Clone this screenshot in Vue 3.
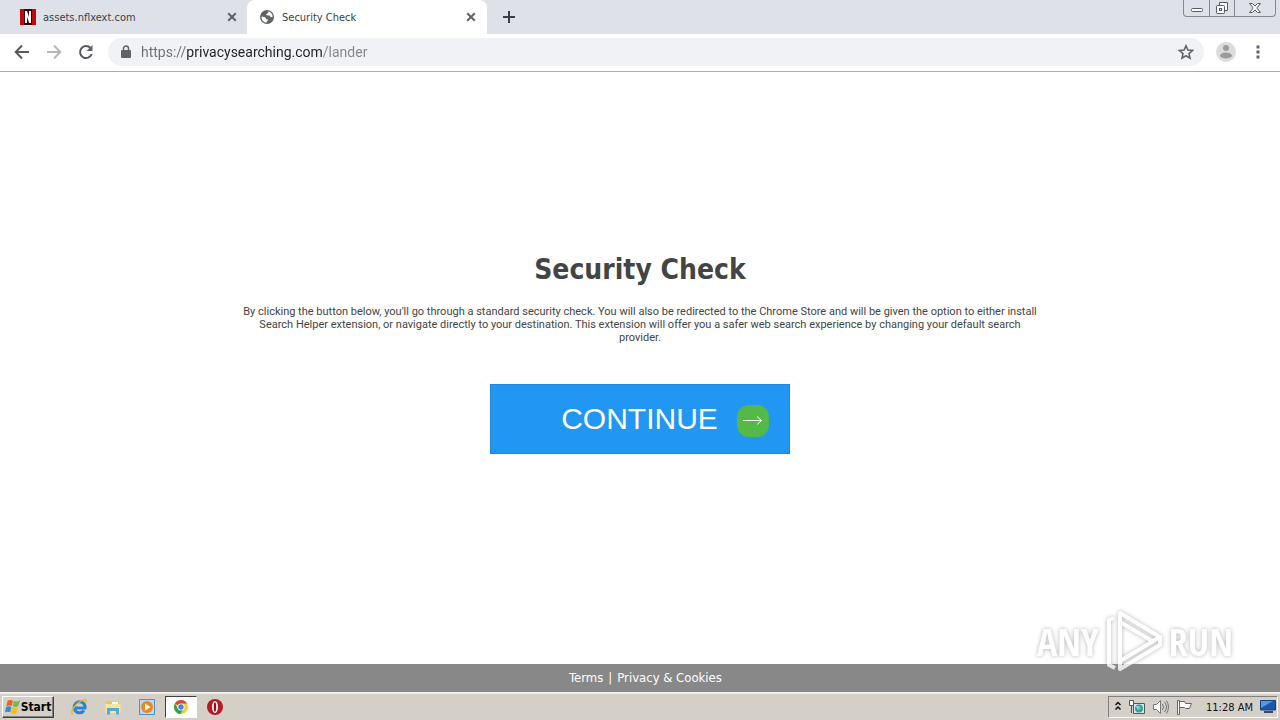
<script setup>
import { ref } from 'vue'
const address = ref('https://privacysearching.com/lander')
</script>

<template>
  <div class="screen">
    <header class="tabs">
      <div class="tab first">
        <svg class="fav" viewBox="0 0 16 16"><path fill="#c4060f" d="M0 0h16v16H0z"/><path fill="#3a0507" d="M4 0h8v16H4z"/><path fill="#fff" d="M5 2h2l2 6V2h2v12H9.200L7 8v6H5z"/></svg>
        <button class="title">assets.nflxext.com</button>
        <button class="close" aria-label="Close tab"><svg viewBox="0 0 10 10"><path d="M1.200 1.200l7.600 7.600M8.800 1.200L1.200 8.800"/></svg></button>
      </div>
      <div class="tab active">
        <svg class="fav" viewBox="0 0 16 16"><circle cx="8" cy="8" r="7" fill="#5f6368"/><path fill="#fff" d="M3 7.500l3.500 1 .7 1.700h1.600v1.400L7.500 13v.8C4.500 13.500 2.500 11 2.500 8zM7 2.300l2.500.1-.4 1.700-1.700 1v1.200l3 .3 1.100 1.300 2 .3c.4-2.700-1.500-5.400-4.500-5.900z"/></svg>
        <button class="title">Security Check</button>
        <button class="close" aria-label="Close tab"><svg viewBox="0 0 10 10"><path d="M1.200 1.200l7.600 7.600M8.800 1.200L1.200 8.800"/></svg></button>
      </div>
      <button class="new" aria-label="New tab"><svg viewBox="0 0 14 14"><path d="M7 1v12M1 7h12"/></svg></button>
      <div class="win">
        <button aria-label="Minimize"><svg width="14" height="14" viewBox="0 0 14 14"><rect x="1.500" y="7.500" width="11" height="3" rx="1"/></svg></button>
        <button aria-label="Restore"><svg width="14" height="14" viewBox="0 0 14 14"><path d="M4.500 4V1.500h8v8H10"/><rect x="1.500" y="4.500" width="8" height="8" rx="1"/><rect x="4.500" y="7.500" width="2" height="2"/></svg></button>
        <button class="wide" aria-label="Close window"><svg width="14" height="14" viewBox="0 0 14 14"><path d="M1.500 2.500h3L7 5l2.500-2.500h3L8.800 7l3.700 4.500h-3L7 9l-2.500 2.500h-3L5.200 7z"/></svg></button>
      </div>
    </header>

    <nav class="toolbar">
      <button class="nav" aria-label="Back"><svg viewBox="0 0 16 16"><path d="M15 8H2M8 1.500L1.700 8 8 14.500"/></svg></button>
      <button class="nav off" aria-label="Forward"><svg viewBox="0 0 16 16"><path d="M1 8h13M8 1.500L14.300 8 8 14.500"/></svg></button>
      <button class="nav" aria-label="Reload"><svg viewBox="0 0 16 16"><path d="M13.700 10A6 6 0 1 1 12.500 4"/><path d="M14.500 1v6h-6z" fill="#5f6368" stroke="none"/></svg></button>
      <div class="omni">
        <svg class="lock" viewBox="0 0 10 14"><path fill="#5f6368" d="M1 5h8q1 0 1 1v6q0 1-1 1H1q-1 0-1-1V6q0-1 1-1z"/><path fill="none" stroke="#5f6368" stroke-width="1.500" d="M2.500 6V3.500a2.500 2.500 0 0 1 5 0V6"/></svg>
        <input v-model="address" class="url" aria-label="Address" spellcheck="false">
        <button class="star" aria-label="Bookmark this page"><svg viewBox="0 0 16 16"><path fill="none" stroke="#5f6368" stroke-width="1.600" d="M8 1.800l1.900 4.300 4.600.4-3.500 3.100 1 4.600L8 11.800l-4 2.400 1-4.600-3.500-3.100 4.600-.4z"/></svg></button>
      </div>
      <button class="user" aria-label="Profile"><svg viewBox="0 0 20 20"><circle cx="10" cy="10" r="10" fill="#dcdcdc"/><circle cx="10" cy="6" r="3" fill="#9b9b9b"/><ellipse cx="10" cy="13.500" rx="6" ry="3" fill="#9b9b9b"/></svg></button>
      <button class="more" aria-label="Menu"><svg viewBox="0 0 4 14"><path fill="#5f6368" d="M.5.5h3v3h-3zM.5 5.500h3v3h-3zM.5 10.500h3v3h-3z"/></svg></button>
    </nav>

    <main class="page">
      <h1>Security Check</h1>
      <p>By clicking the button below, you'll go through a standard security check. You will also be redirected to the Chrome Store and will be given the option to either install<br>Search Helper extension, or navigate directly to your destination. This extension will offer you a safer web search experience by changing your default search<br>provider.</p>
      <button class="go"><span>CONTINUE</span><i><svg viewBox="0 0 20 10"><path d="M0 4.500h19M14 .5l4.500 4-4.500 4"/></svg></i></button>
    </main>

    <footer class="links"><a href="#terms">Terms</a><span>|</span><a href="#privacy">Privacy &amp; Cookies</a></footer>

    <div class="task">
      <button class="start"><svg viewBox="0 0 18 18"><path fill="#e8642b" d="M3 2q3-2 6 0L7.500 8Q5 6.500 1.500 8z"/><path fill="#78b843" d="M10 2q3 2 7-1l-2 7q-3 2-6.500 0z"/><path fill="#3b88d8" d="M1.200 9q3-1.500 6 0L6 15q-3-1.500-6 0z"/><path fill="#f6bd25" d="M8.200 9.300q3 1.700 6.500 0L13 16q-3 2-6.300 0z"/></svg><b>Start</b></button>
      <button class="app" aria-label="Internet Explorer"><svg viewBox="0 0 18 18"><path fill="none" stroke="#2d83d3" stroke-width="3" d="M14 12.500A5.500 5.500 0 1 1 15 10H5"/><path fill="none" stroke="#e9b92e" stroke-width="1.400" d="M3 16C-1 16 4 7 10 3.500c4-2.500 7-2.500 6 1"/></svg></button>
      <button class="app" aria-label="File Explorer"><svg viewBox="0 0 18 18"><path fill="#e7c85e" d="M2 3h6l1 1h6v3H2z"/><path fill="#fff" d="M8 4h6v2H8z"/><path fill="#f6e59b" d="M1.500 6h15v9h-15z"/><path fill="#53a9d8" d="M3 10h12v6.500h-3V13H6v3.500H3z"/></svg></button>
      <button class="app" aria-label="Media Player"><svg viewBox="0 0 18 18"><path fill="#b9d8f3" stroke="#4e91cf" d="M1.500 1.500h15v15h-15z"/><circle cx="9" cy="9" r="6" fill="#f58418"/><path fill="#fff" d="M7 5.500L12.500 9 7 12.500z"/></svg></button>
      <button class="app on" aria-label="Chrome"><svg viewBox="0 0 18 18"><circle cx="9" cy="9" r="7" fill="#f7cd3c"/><path fill="#de4537" d="M9 9L2.900 5.500A7 7 0 0 1 15.100 5.500H9z"/><path fill="#2ea254" d="M2.900 5.500A7 7 0 0 0 8.500 16l3.200-5.500L9 9 6 11z"/><circle cx="9" cy="9" r="3.500" fill="#fff"/><circle cx="9" cy="9" r="2.700" fill="#4285ea"/></svg></button>
      <button class="app" aria-label="Opera"><svg viewBox="0 0 18 18"><circle cx="9" cy="9" r="8" fill="#b51a1f"/><ellipse cx="9" cy="9" rx="3" ry="6" fill="#fff"/><ellipse cx="9" cy="9" rx="1.200" ry="4.800" fill="#8c1116"/></svg></button>
      <div class="tray">
        <svg width="8" height="12" viewBox="0 0 8 12"><path fill="none" stroke="#111" stroke-width="1.500" d="M1.500 4L4 1.500 6.500 4M1.500 8.500L4 6l2.500 2.500"/></svg>
        <svg width="18" height="16" viewBox="0 0 18 16"><path fill="#fff" stroke="#555" d="M1.500 1.500h4v5h-4zM3.500 6v8"/><path fill="#d6e7ea" stroke="#4b5960" d="M5.500 4.500h11v10h-11z"/><circle cx="11" cy="9.500" r="4" fill="#36a48f"/><path fill="#82c9e0" d="M7 7h4l2 2-3 2z"/></svg>
        <svg width="18" height="16" viewBox="0 0 18 16"><path fill="#fff" stroke="#777" d="M1.500 5.500h3l4-4v13l-4-4h-3z"/><path fill="none" stroke="#777" d="M10.500 5q2 3 0 6M12.500 3q4 5 0 10M14.500 1.500q4 6.500 0 13"/></svg>
        <svg width="18" height="16" viewBox="0 0 18 16"><path fill="#fff" stroke="#666" d="M1.500 15.500v-14h2v14zM3.500 2.500h5l1 2h6l-2 5h-4l-1-1h-5z"/></svg>
        <time>11:28 AM</time>
        <svg width="16" height="14" viewBox="0 0 16 14"><path fill="#1b58ad" stroke="#163f7c" d="M.5.5h15v9.500H.5z"/><path fill="#5799df" d="M1 1h12L1 8z"/><path fill="#304d70" d="M4 11h9v2H4z"/></svg>
      </div>
    </div>

    <div class="mark">
      <span>ANY</span>
      <svg viewBox="0 0 60 66"><g fill="none" stroke="#fff" stroke-width="4" stroke-linejoin="round"><path d="M16 5v48l40-24z"/><path d="M10 10L5 12v45l6 3M16 53v8l40-24v-8M16 14l34 20"/></g></svg>
      <span>RUN</span>
    </div>
  </div>
</template>

<style>
body { margin: 0; }
</style>

<style scoped>
.screen { position: relative; display: flex; flex-direction: column; height: 100vh; overflow: hidden; background: #fff; font: 11px/13px "DejaVu Sans Condensed", "DejaVu Sans", sans-serif; color: #444; }
* { box-sizing: border-box; }
button { padding: 0; border: 0; background: none; font: inherit; color: inherit; display: flex; align-items: center; justify-content: center; flex: none; }
svg { display: block; flex: none; }
.tabs { display: flex; height: 34px; background: #dee1e8; flex: none; }
.tab { display: flex; align-items: center; height: 34px; color: #3c4043; }
.first { width: 247px; padding: 0 8px 0 20px; }
.active { width: 240px; padding: 0 9px 0 12px; background: #fff; border-radius: 8px 8px 0 0; }
.fav { width: 16px; height: 16px; margin-right: 7px; }
.title { flex: 1; justify-content: flex-start; }
.close { width: 14px; height: 16px; }
.close svg { width: 10px; height: 10px; }
.close path, .new path { fill: none; stroke: #5f6368; stroke-width: 2; }
.new { width: 44px; }
.new svg { width: 14px; height: 14px; }
.new path { stroke: #3c4043; }
.win { display: flex; height: 17px; margin: 0 4px 0 auto; border: 1px solid #85888f; border-top: 0; border-radius: 0 0 4px 4px; }
.win button { width: 25px; }
.win button + button { border-left: 1px solid #85888f; }
.win .wide { width: 41px; }
.win svg { fill: #fff; stroke: #555a66; }
.toolbar { display: flex; align-items: center; height: 38px; padding: 0 14px 2px 14px; border-bottom: 1px solid #adadad; flex: none; }
.nav { width: 16px; height: 16px; margin-right: 16px; }
.nav svg { width: 16px; height: 16px; fill: none; stroke: #55585c; stroke-width: 2; }
.nav.off svg { stroke: #b5b7ba; }
.nav:nth-child(3) { margin-right: 14px; }
.omni { display: flex; align-items: center; flex: 1; height: 28px; padding: 0 10px 0 13px; border-radius: 14px; background: #f0f2f5; }
.lock { width: 10px; height: 14px; margin-right: 10px; }
.url { flex: 1; min-width: 0; height: 20px; padding: 0; border: 0; outline: 0; font: 14px/20px Roboto, sans-serif; color: transparent; background: linear-gradient(90deg, #6c7075 46px, #202124 46px 181px, #80868b 181px); -webkit-background-clip: text; background-clip: text; }
.star, .star svg { width: 16px; height: 16px; }
.user { width: 20px; height: 20px; margin: 0 20px 0 12px; }
.user svg { width: 20px; height: 20px; }
.more, .more svg { width: 4px; height: 14px; }
.more { margin-right: 6px; }
.page { flex: 1; display: flex; flex-direction: column; align-items: center; padding: 181px 20px 0; }
h1 { margin: 0; font-size: 28px; line-height: 34px; color: #444; }
p { margin: 18px 0 0; text-align: center; white-space: nowrap; font-family: Roboto, sans-serif; }
.go { width: 300px; height: 70px; margin-top: 40px; padding-left: 50px; border: 1px solid #1e86dc; background: #2196f3; color: #fff; font: 30px/36px "Liberation Sans", Arial, sans-serif; }
.go i { display: flex; align-items: center; justify-content: center; width: 32px; height: 32px; margin: 4px 0 0 19px; border-radius: 12px; background: #55b947; }
.go i svg { width: 20px; height: 10px; fill: none; stroke: #fff; }
.links { display: flex; justify-content: center; align-items: center; gap: 5px; height: 28px; padding-left: 11px; flex: none; background: #888; color: #fff; font-size: 13px; line-height: 16px; }
.links a { color: #fff; text-decoration: none; }
.task { display: flex; align-items: center; height: 28px; padding: 0 2px; flex: none; background: #d4d0c8; border-top: 2px solid #f2f1ed; }
.start { width: 52px; height: 22px; margin-right: 9px; border: 1px solid; border-color: #fff #404040 #404040 #fff; box-shadow: inset -1px -1px #808080; color: #000; font-size: 12px; }
.start svg { width: 16px; height: 16px; }
.app { width: 32px; height: 22px; margin-right: 2px; }
.app svg { width: 18px; height: 18px; }
.app.on { background: #fff; border: 1px solid; border-color: #404040 #fff #fff #404040; }
.tray { display: flex; align-items: center; gap: 6px; height: 22px; margin-left: auto; padding: 0 1px 0 5px; border: 1px solid; border-color: #808080 #fff #fff #808080; color: #111; }
.tray time { margin: 0 1px 0 6px; }
.mark { position: absolute; right: 47px; bottom: 46px; display: flex; align-items: center; gap: 5px; color: #fff; font: 38px/66px "Noto Sans ExtraCondensed", "Open Sans Condensed", "Roboto Condensed", "Liberation Sans Narrow", sans-serif; filter: drop-shadow(0 0 2px #888c); opacity: .8; pointer-events: none; }
.mark svg { width: 60px; height: 66px; }
</style>
